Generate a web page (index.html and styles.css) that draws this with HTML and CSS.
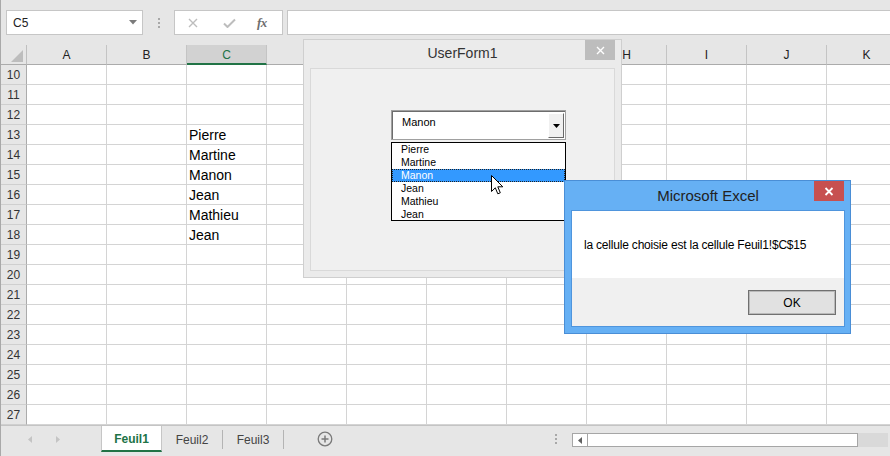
FILE: index.html
```html
<!DOCTYPE html>
<html lang="fr">
<head>
<meta charset="utf-8">
<title>Excel</title>
<link rel="stylesheet" href="styles.css">
</head>
<body>
<div class="app">
  <div class="fbar">
    <div class="namebox"><span>C5</span><svg width="8" height="5" viewBox="0 0 8 5"><path d="M0 0h8L4 4.5z" fill="#7b7b7b"/></svg></div>
    <div class="grip"><i></i><i></i><i></i></div>
    <div class="fbtns">
      <svg class="ico-x" width="10" height="10" viewBox="0 0 10 10"><path d="M1 1L9 9M9 1L1 9" stroke="#bdbdbd" stroke-width="1.4" fill="none"/></svg>
      <svg class="ico-ok" width="13" height="10" viewBox="0 0 13 10"><path d="M1 5.5L4.5 9L12 1.5" stroke="#bdbdbd" stroke-width="2" fill="none"/></svg>
      <span class="fx">fx</span>
    </div>
    <div class="finput"></div>
  </div>

  <div class="colhdr">
    <div class="corner"><svg width="12" height="12" viewBox="0 0 12 12"><path d="M12 0V12H0z" fill="#bdbdbd"/></svg></div>
    <div class="ch">A</div><div class="ch">B</div><div class="ch sel">C</div><div class="ch"></div><div class="ch"></div><div class="ch"></div><div class="ch"></div><div class="ch">H</div><div class="ch">I</div><div class="ch">J</div><div class="ch">K</div>
  </div>
  <div class="row"><div class="rh">10</div><div class="cells"></div></div>
  <div class="row"><div class="rh">11</div><div class="cells"></div></div>
  <div class="row"><div class="rh">12</div><div class="cells"></div></div>
  <div class="row"><div class="rh">13</div><div class="cells"><span class="val">Pierre</span></div></div>
  <div class="row"><div class="rh">14</div><div class="cells"><span class="val">Martine</span></div></div>
  <div class="row"><div class="rh">15</div><div class="cells"><span class="val">Manon</span></div></div>
  <div class="row"><div class="rh">16</div><div class="cells"><span class="val">Jean</span></div></div>
  <div class="row"><div class="rh">17</div><div class="cells"><span class="val">Mathieu</span></div></div>
  <div class="row"><div class="rh">18</div><div class="cells"><span class="val">Jean</span></div></div>
  <div class="row"><div class="rh">19</div><div class="cells"></div></div>
  <div class="row"><div class="rh">20</div><div class="cells"></div></div>
  <div class="row"><div class="rh">21</div><div class="cells"></div></div>
  <div class="row"><div class="rh">22</div><div class="cells"></div></div>
  <div class="row"><div class="rh">23</div><div class="cells"></div></div>
  <div class="row"><div class="rh">24</div><div class="cells"></div></div>
  <div class="row"><div class="rh">25</div><div class="cells"></div></div>
  <div class="row"><div class="rh">26</div><div class="cells"></div></div>
  <div class="row"><div class="rh">27</div><div class="cells"></div></div>

  <div class="tabs">
    <div class="nav">
      <svg width="4" height="7" viewBox="0 0 4 7"><path d="M4 0V7L0 3.5z" fill="#c4c4c4"/></svg>
      <svg width="4" height="7" viewBox="0 0 4 7"><path d="M0 0V7L4 3.5z" fill="#c4c4c4"/></svg>
    </div>
    <div class="tab active">Feuil1</div>
    <div class="tab">Feuil2</div>
    <div class="sep"></div>
    <div class="tab">Feuil3</div>
    <div class="sep"></div>
    <svg class="plus" width="16" height="16" viewBox="0 0 16 16"><circle cx="8" cy="8" r="6.8" fill="none" stroke="#7a7a7a" stroke-width="1.3"/><path d="M8 4.5V11.5M4.5 8H11.5" stroke="#7a7a7a" stroke-width="1.5"/></svg>
    <div class="grip2"><i></i><i></i><i></i></div>
    <div class="hscroll">
      <div class="hs-btn"><svg width="4" height="7" viewBox="0 0 4 7"><path d="M4 0V7L0 3.5z" fill="#606060"/></svg></div>
    </div>
    <div class="hs-end"></div>
  </div>
</div>

<div class="userform">
  <div class="uf-title">UserForm1
    <div class="uf-close"><svg width="9" height="9" viewBox="0 0 9 9"><path d="M1 1L8 8M8 1L1 8" stroke="#fff" stroke-width="1.4"/></svg></div>
  </div>
  <div class="uf-body">
    <div class="combo">
      <span class="combo-text">Manon</span>
      <div class="combo-btn"><svg width="7" height="4" viewBox="0 0 7 4"><path d="M0 0h7L3.5 4z" fill="#000"/></svg></div>
    </div>
    <div class="list">
      <div>Pierre</div>
      <div>Martine</div>
      <div class="hl">Manon</div>
      <div>Jean</div>
      <div>Mathieu</div>
      <div>Jean</div>
    </div>
  </div>
</div>

<div class="msgbox">
  <div class="mb-title">Microsoft Excel
    <div class="mb-close"><svg width="10" height="9" viewBox="0 0 10 9"><path d="M1.5 1L8.5 8M8.5 1L1.5 8" stroke="#fff" stroke-width="1.8"/></svg></div>
  </div>
  <div class="mb-body">
    <div class="mb-msg">la cellule choisie est la cellule Feuil1!$C$15</div>
    <div class="mb-foot"><div class="ok">OK</div></div>
  </div>
</div>

<svg class="cursor" width="13" height="21" viewBox="0 0 13 21"><path d="M0.5 0.5V16.5L4.3 12.8L6.8 18.8L9.3 17.8L6.8 11.8H11.8Z" fill="#fff" stroke="#000" stroke-width="1" stroke-linejoin="miter"/></svg>
</body>
</html>
```

FILE: styles.css
```css
* { box-sizing: border-box; margin: 0; padding: 0; }
html, body { width: 890px; height: 456px; overflow: hidden; }
body {
  position: relative;
  background: #e6e6e6;
  font-family: "Liberation Sans", Arial, sans-serif;
  color: #000;
}
.app {
  display: flex;
  flex-direction: column;
  height: 456px;
  border-left: 1px solid #a9a9a9;
}

/* formula bar */
.fbar {
  height: 45px;
  flex: none;
  display: flex;
  align-items: flex-start;
  padding: 10px 0 0 5px;
}
.namebox {
  width: 137px;
  height: 25px;
  background: #fff;
  border: 1px solid #c6c6c6;
  display: flex;
  align-items: center;
  justify-content: space-between;
  padding: 0 5px 0 6px;
  font-size: 12px;
  color: #222;
}
.grip {
  width: 31px;
  height: 25px;
  display: flex;
  flex-direction: column;
  align-items: center;
  justify-content: center;
  gap: 2px;
}
.grip i, .grip2 i {
  display: block;
  width: 2px;
  height: 2px;
  background: #a8a8a8;
}
.fbtns {
  width: 109px;
  height: 25px;
  border: 1px solid #c6c6c6;
  background: #fff;
  display: flex;
  align-items: center;
}
.ico-x { margin-left: 13px; }
.ico-ok { margin-left: 25px; }
.fx {
  margin-left: 21px;
  font-family: "Liberation Serif", "Times New Roman", serif;
  font-style: italic;
  font-weight: bold;
  font-size: 13px;
  color: #6e6e6e;
  letter-spacing: -0.5px;
}
.finput {
  flex: 1;
  height: 25px;
  margin-left: 4px;
  margin-right: -2px;
  border: 1px solid #c6c6c6;
  background: #fff;
}

/* sheet */
.colhdr {
  display: flex;
  height: 20px;
  flex: none;
  background: #e6e6e6;
}
.corner {
  width: 26px;
  flex: none;
  border-right: 1px solid #bfbfbf;
  border-bottom: 1px solid #ababab;
  display: flex;
  align-items: flex-end;
  justify-content: flex-end;
  padding: 0 3px 2px 0;
}
.ch {
  width: 80px;
  flex: none;
  border-right: 1px solid #c4c4c4;
  border-bottom: 1px solid #ababab;
  text-align: center;
  font-size: 12px;
  line-height: 20px;
  color: #222;
}
.ch.sel {
  background: #d2d2d2;
  color: #217346;
  border-bottom: 2px solid #217346;
}
.row {
  display: flex;
  height: 20px;
  flex: none;
}
.rh {
  width: 26px;
  flex: none;
  background: #e6e6e6;
  border-right: 1px solid #ababab;
  border-bottom: 1px solid #cfcfcf;
  text-align: center;
  font-size: 12px;
  line-height: 21px;
  color: #333;
}
.cells {
  flex: 1;
  background: linear-gradient(to right, transparent 79px, #d4d4d4 79px) 0 0 / 80px 100% repeat-x #fff;
  border-bottom: 1px solid #d4d4d4;
  font-size: 14px;
  line-height: 21px;
  color: #000;
  white-space: nowrap;
}
.val { margin-left: 162px; }

/* sheet tabs */
.tabs {
  flex: 1;
  border-top: 1px solid #c4c4c4;
  display: flex;
  align-items: flex-start;
  background: #e6e6e6;
}
.nav {
  width: 100px;
  height: 26px;
  display: flex;
  align-items: center;
  padding-left: 27px;
  gap: 24px;
}
.tab {
  width: 60px;
  height: 26px;
  display: flex;
  align-items: center;
  justify-content: center;
  font-size: 12px;
  color: #444;
  padding-top: 1px;
}
.tab.active {
  width: 61px;
  background: #fff;
  color: #217346;
  font-weight: bold;
  border-left: 1px solid #c6c6c6;
  border-right: 1px solid #c6c6c6;
  border-bottom: 2px solid #217346;
}
.sep {
  width: 1px;
  height: 19px;
  margin-top: 4px;
  background: #b4b4b4;
}
.plus { margin: 5px 0 0 33px; }
.grip2 {
  margin: 8px 0 0 222px;
  display: flex;
  flex-direction: column;
  gap: 2px;
}
.hscroll {
  margin: 7px 0 0 15px;
  width: 286px;
  height: 14px;
  background: #fff;
  border: 1px solid #a6a6a6;
  display: flex;
}
.hs-btn {
  width: 15px;
  height: 12px;
  border-right: 1px solid #a6a6a6;
  display: flex;
  align-items: center;
  justify-content: center;
}
.hs-end {
  margin-top: 7px;
  width: 30px;
  height: 14px;
  background: #d9d9d9;
}

/* UserForm window */
.userform {
  position: absolute;
  left: 303px;
  top: 39px;
  width: 319px;
  height: 239px;
  background: #ebebeb;
  border: 1px solid #cfcfcf;
  padding: 0 6px 6px 6px;
  display: flex;
  flex-direction: column;
}
.uf-title {
  position: relative;
  height: 28px;
  flex: none;
  display: flex;
  align-items: center;
  justify-content: center;
  font-size: 14px;
  color: #333;
  padding-bottom: 2px;
}
.uf-close {
  position: absolute;
  right: 0;
  top: 0;
  width: 30px;
  height: 20px;
  background: #bdbdbd;
  display: flex;
  align-items: center;
  justify-content: center;
}
.uf-body {
  flex: 1;
  background: #f0f0f0;
  border: 1px solid #d9d9d9;
  padding: 41px 0 0 80px;
}
.combo {
  width: 175px;
  height: 30px;
  background: #fff;
  border: 1px solid #a0a0a0;
  box-shadow: inset 1px 1px #6d6d6d;
  display: flex;
  justify-content: space-between;
  padding: 2px 1px 2px 2px;
  font-size: 11px;
}
.combo-text { padding: 3px 0 0 8px; }
.combo-btn {
  width: 16px;
  height: 25px;
  background: #f0f0f0;
  border: 1px solid;
  border-color: #fff #696969 #696969 #fff;
  display: flex;
  align-items: center;
  justify-content: center;
}
.list {
  width: 175px;
  height: 79px;
  margin-top: 2px;
  background: #fff;
  border: 1px solid #000;
  font-size: 10.5px;
}
.list div {
  height: 13px;
  line-height: 13px;
  padding-left: 9px;
}
.list .hl {
  background: #3399ff;
  color: #fff;
  outline: 1px dotted #222;
  outline-offset: -1px;
}

/* message box */
.msgbox {
  position: absolute;
  left: 564px;
  top: 180px;
  width: 287px;
  height: 154px;
  background: #66b0f4;
  border: 1px solid #4a8ed6;
  padding: 0 5px 6px 6px;
  display: flex;
  flex-direction: column;
}
.mb-title {
  position: relative;
  height: 29px;
  flex: none;
  display: flex;
  align-items: center;
  justify-content: center;
  font-size: 15px;
  color: #222;
}
.mb-close {
  position: absolute;
  right: 1px;
  top: 0;
  width: 30px;
  height: 20px;
  background: #c75050;
  display: flex;
  align-items: center;
  justify-content: center;
}
.mb-body {
  flex: 1;
  border: 1px solid #4f95dd;
  background: #fff;
  display: flex;
  flex-direction: column;
}
.mb-msg {
  height: 67px;
  flex: none;
  display: flex;
  align-items: center;
  padding: 0 0 0 12px;
  font-size: 12px;
  letter-spacing: -0.2px;
  color: #000;
  white-space: nowrap;
}
.mb-foot {
  flex: 1;
  background: #f0f0f0;
  display: flex;
  justify-content: flex-end;
  align-items: flex-start;
  padding: 12px 8px 0 0;
}
.ok {
  width: 88px;
  height: 25px;
  background: #e1e1e1;
  border: 1px solid #707070;
  box-shadow: inset 0 0 0 1px #b9b9b9;
  display: flex;
  align-items: center;
  justify-content: center;
  font-size: 12px;
  color: #000;
}

.cursor {
  position: absolute;
  left: 491px;
  top: 175px;
}
```
